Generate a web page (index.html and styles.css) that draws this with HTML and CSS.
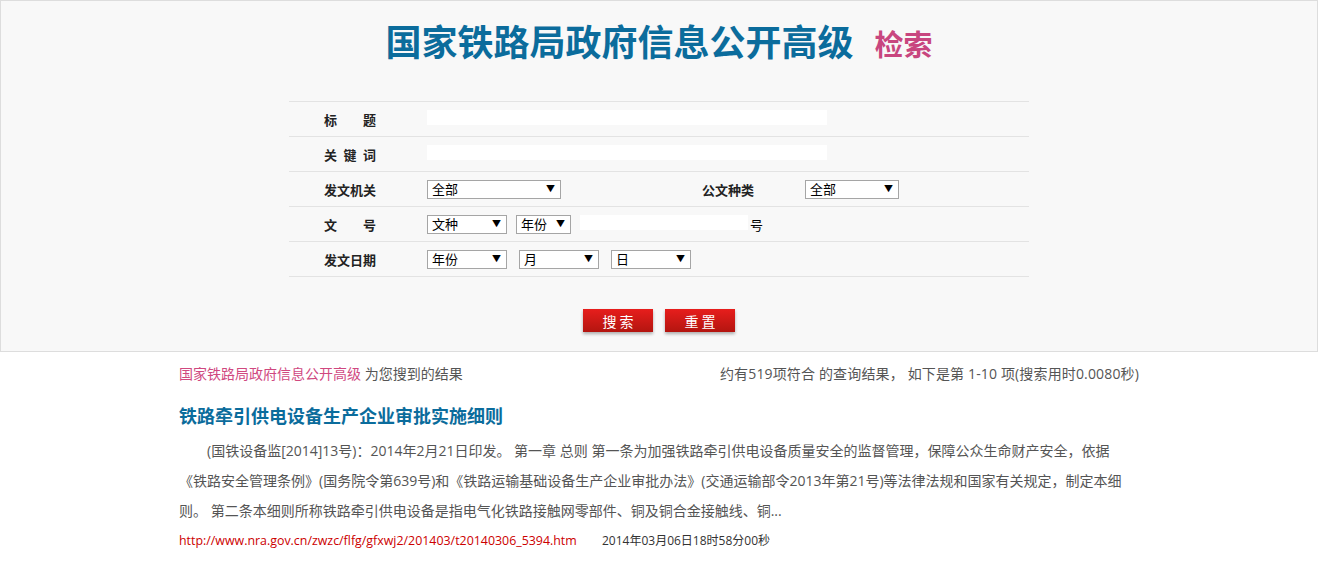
FILE: index.html
```html
<!DOCTYPE html>
<html>
<head lang="zh-CN">
	<meta charset="UTF-8">
	<title>国家铁路局政府信息公开高级检索</title>
	<link rel="stylesheet" href="styles.css">
</head>
<body>
	<div class="search_box">
		<h1 class="title">国家铁路局政府信息公开高级<span>检索</span></h1>
		<div class="form">
			<div class="row">
				<label class="name">标　　题</label>
				<div class="field full"><input class="txt long" type="text"></div>
			</div>
			<div class="row">
				<label class="name">关&ensp;键&ensp;词</label>
				<div class="field full"><input class="txt long" type="text"></div>
			</div>
			<div class="row">
				<label class="name">发文机关</label>
				<div class="field">
					<span class="sel w133"><select><option>全部</option></select></span>
				</div>
				<label class="name">公文种类</label>
				<div class="field">
					<span class="sel w94"><select><option>全部</option></select></span>
				</div>
			</div>
			<div class="row">
				<label class="name">文　　号</label>
				<div class="field full">
					<span class="sel w80"><select><option>文种</option></select></span>
					<span class="sel w55"><select><option>年份</option></select></span>
					<input class="txt short" type="text"><span class="unit">号</span>
				</div>
			</div>
			<div class="row">
				<label class="name">发文日期</label>
				<div class="field full">
					<span class="sel w80"><select><option>年份</option></select></span>
					<span class="sel w80 gap"><select><option>月</option></select></span>
					<span class="sel w80 gap"><select><option>日</option></select></span>
				</div>
			</div>
		</div>
		<div class="btns">
			<button>搜索</button>
			<button>重置</button>
		</div>
	</div>

	<div class="result">
		<div class="summary">
			<div><em>国家铁路局政府信息公开高级</em> 为您搜到的结果</div>
			<div class="total">约有519项符合 的查询结果， 如下是第 1-10 项(搜索用时0.0080秒)</div>
		</div>
		<h2>铁路牵引供电设备生产企业审批实施细则</h2>
		<p>(国铁设备监[2014]13号)：2014年2月21日印发。 第一章 总则 第一条为加强铁路牵引供电设备质量安全的监督管理，保障公众生命财产安全，依据《铁路安全管理条例》(国务院令第639号)和《铁路运输基础设备生产企业审批办法》(交通运输部令2013年第21号)等法律法规和国家有关规定，制定本细则。 第二条本细则所称铁路牵引供电设备是指电气化铁路接触网零部件、铜及铜合金接触线、铜...</p>
		<div class="link">
			<a href="#">http://www.nra.gov.cn/zwzc/flfg/gfxwj2/201403/t20140306_5394.htm</a>
			<span>2014年03月06日18时58分00秒</span>
		</div>
	</div>
</body>
</html>
```

FILE: styles.css
```css
*{
	margin:0;
	padding:0;
	box-sizing:border-box;
}
body{
	font-family:"Open Sans","Noto Sans CJK SC",sans-serif;
	font-size:14px;
	color:#555;
	background:#fff;
}
.search_box{
	background:#f8f8f8;
	border:1px solid #ddd;
	padding:17px 0 19px;
}
.title{
	text-align:center;
	font-size:36px;
	line-height:50px;
	font-weight:bold;
	color:#0b6c9c;
}
.title span{
	font-size:29px;
	color:#c8467f;
	margin-left:21px;
}
.form{
	width:740px;
	margin:31px auto 0;
	border-top:1px solid #e3e3e3;
}
.row{
	display:grid;
	grid-template-columns:122px 256px 122px 1fr;
	align-items:center;
	height:35px;
	border-bottom:1px solid #e3e3e3;
}
.name{
	text-align:center;
	font-size:13px;
	font-weight:bold;
	color:#222;
}
.field{
	display:flex;
	align-items:center;
	padding-left:16px;
	font-size:13px;
	color:#000;
}
.full{
	grid-column:2 / 5;
}
.txt{
	height:15px;
	border:none;
	background:#fff;
	outline:none;
	margin-bottom:3px;
}
.long{
	width:400px;
}
.short{
	width:168px;
	margin-left:9px;
}
.unit{
	margin-left:2px;
}
.sel{
	position:relative;
	display:inline-block;
	height:19px;
}
.sel select{
	appearance:none;
	-webkit-appearance:none;
	width:100%;
	height:19px;
	border:1px solid #a5a5a5;
	background:#fff;
	font-family:"Liberation Sans","Noto Sans CJK SC",sans-serif;
	font-size:13px;
	line-height:17px;
	padding:0 0 0 4px;
	color:#000;
	border-radius:0;
	outline:none;
}
.sel:after{
	content:"\25BC";
	position:absolute;
	right:6px;
	top:4px;
	font-size:9px;
	line-height:10px;
	color:#000;
	pointer-events:none;
}
.w133{ width:134px; }
.w94{ width:94px; }
.w80{ width:80px; }
.w55{ width:55px; margin-left:9px; }
.gap{ margin-left:12px; }
.btns{
	display:flex;
	justify-content:center;
	gap:12px;
	margin-top:32px;
}
.btns button{
	width:70px;
	height:23px;
	border:none;
	background:linear-gradient(#e71e1c 0%,#b31510 100%);
	box-shadow:0 2px 3px rgba(0,0,0,.3);
	color:#fff;
	font-family:"Noto Sans CJK SC",sans-serif;
	font-size:14px;
	letter-spacing:3px;
	text-indent:3px;
	cursor:pointer;
}
.result{
	width:960px;
	margin:12px auto 0;
}
.summary{
	display:flex;
	justify-content:space-between;
	line-height:20px;
	color:#555;
}
.summary em{
	font-style:normal;
	color:#d0487f;
}
.total{
	letter-spacing:0.15px;
}
.result h2{
	margin-top:17px;
	font-size:18px;
	line-height:30px;
	color:#0b6c9c;
}
.result p{
	margin-top:5px;
	padding-right:8px;
	line-height:30px;
	text-indent:2em;
	color:#555;
}
.link{
	line-height:30px;
	font-size:12.4px;
}
.link a{
	color:#c00;
	text-decoration:none;
}
.link span{
	margin-left:22px;
	color:#333;
	font-size:12px;
}
```
